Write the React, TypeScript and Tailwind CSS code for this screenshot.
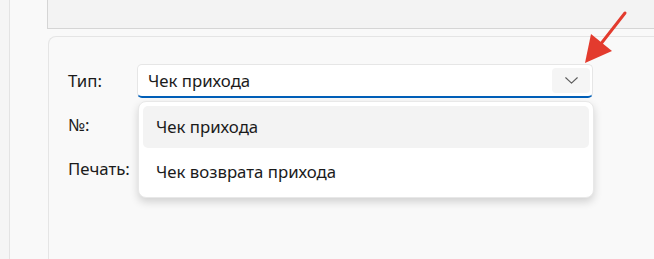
import React from 'react';

const Chevron: React.FC = () => (
    <svg width="13" height="7" viewBox="0 0 13 7" fill="none">
        <path d="M0.75 0.75 L6.5 6.2 L12.25 0.75" stroke="#5c5c5c" strokeWidth="1.1" strokeLinecap="round" strokeLinejoin="round" />
    </svg>
);

const options = ['Чек прихода', 'Чек возврата прихода'];

export default function App() {
    return (
        <div className="relative flex h-[259px] w-[654px] overflow-hidden bg-[#f9f9f9] text-[16.8px] text-[#1b1b1b] font-['Noto_Sans',sans-serif]">
            <div className="w-[10px] border-r border-[#e3e3e3] bg-[#f5f5f5]" />
            <div className="w-[37px]" />
            <div className="flex flex-1 flex-col">
                <div className="h-[29px] border-b border-l border-[#d5d5d5] bg-[#f3f3f3]" />
                <div className="relative ml-px mt-[7px] flex-1 rounded-tl-lg border-l border-t border-[#e5e5e5] bg-[#f9f9f9] pl-[19px] pt-[27px]">
                    <div className="flex h-[34px] items-center">
                        <span className="w-[69px]">Тип:</span>
                        <div className="flex h-[34px] w-[456px] items-center justify-between rounded-[5px] border border-[#e6e6e6] border-b-2 border-b-[#005fb8] bg-white pl-[10px] pr-[2px]">
                            <span>{options[0]}</span>
                            <div className="flex h-[25px] w-[38px] items-center justify-center rounded-[4px] bg-[#f5f5f5]">
                                <Chevron />
                            </div>
                        </div>
                    </div>
                    <div className="flex h-[44px] items-center pt-[9px]">
                        <span>№:</span>
                    </div>
                    <div className="flex h-[44px] items-center pt-[10px]">
                        <span>Печать:</span>
                    </div>

                    <div className="absolute left-[89px] top-[64px] w-[456px] rounded-lg border border-[#e8e8e8] bg-white p-[4px] shadow-[0_4px_9px_rgba(0,0,0,0.16)]">
                        {options.map((o, i) => (
                            <div
                                key={o}
                                className={`flex h-[42px] items-center rounded-[5px] pl-[13px] ${i === 0 ? 'bg-[#f3f3f3]' : ''} ${i === 1 ? 'mt-[3px]' : ''}`}
                            >
                                {o}
                            </div>
                        ))}
                    </div>
                </div>
            </div>

            {/* red pointer arrow */}
            <svg className="pointer-events-none absolute left-0 top-0" width="654" height="259">
                <line x1="625" y1="13" x2="600" y2="45" stroke="#e33b2e" strokeWidth="3" strokeLinecap="round" />
                <polygon points="585,63 591,34 612,51" fill="#e33b2e" />
            </svg>
        </div>
    );
}
